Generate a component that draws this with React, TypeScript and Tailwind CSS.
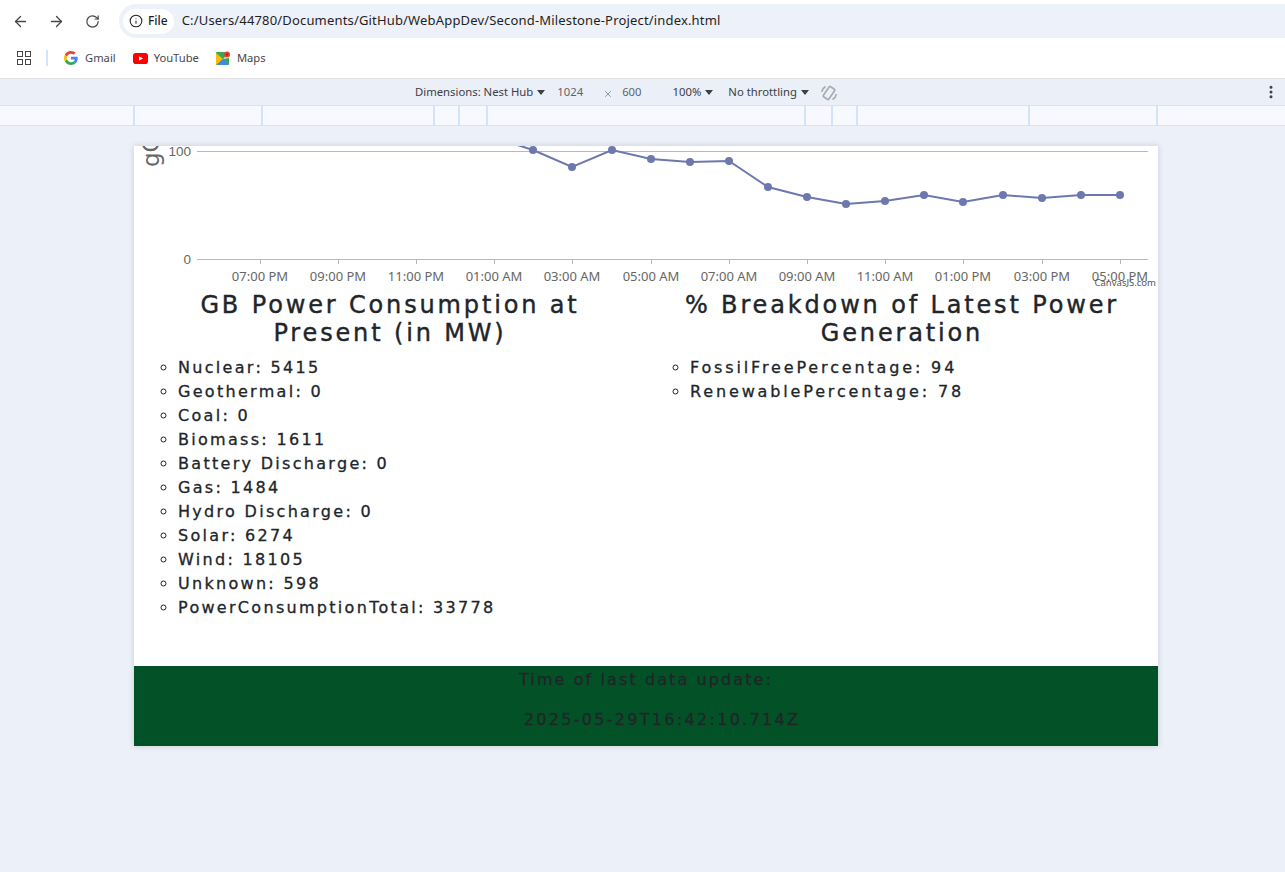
import React from 'react';
import { ArrowLeft, ArrowRight, RotateCw, Info, EllipsisVertical, X } from 'lucide-react';

const generation = [
  'Nuclear: 5415',
  'Geothermal: 0',
  'Coal: 0',
  'Biomass: 1611',
  'Battery Discharge: 0',
  'Gas: 1484',
  'Hydro Discharge: 0',
  'Solar: 6274',
  'Wind: 18105',
  'Unknown: 598',
  'PowerConsumptionTotal: 33778',
];

const breakdown = ['FossilFreePercentage: 94', 'RenewablePercentage: 78'];

const points: [number, number][] = [
  [505, 141], [533, 150], [572, 167], [612, 150], [651, 159], [690, 162], [729, 161], [768, 187], [807, 197],
  [846, 204], [885, 201], [924, 195], [963, 202], [1003, 195], [1042, 198], [1081, 195], [1120, 195],
];

const ticks: [number, string][] = [
  [260, '07:00 PM'], [338, '09:00 PM'], [416, '11:00 PM'], [494, '01:00 AM'], [572, '03:00 AM'], [651, '05:00 AM'],
  [729, '07:00 AM'], [807, '09:00 AM'], [885, '11:00 AM'], [963, '01:00 PM'], [1042, '03:00 PM'], [1120, '05:00 PM'],
];

function Caret() {
  return <span className="ml-[4px] inline-block w-0 h-0 border-x-[4px] border-x-transparent border-t-[5px] border-t-[#3c4043]" />;
}

function GoogleIcon() {
  return (
    <svg width="14" height="14" viewBox="0 0 48 48">
      <path fill="#EA4335" d="M24 9.5c3.5 0 6.700 1.300 9.100 3.500l6.800-6.800C35.800 2.400 30.300 0 24 0 14.600 0 6.500 5.400 2.600 13.200l7.900 6.200C12.400 13.600 17.700 9.500 24 9.500z" />
      <path fill="#4285F4" d="M46.900 24.500c0-1.600-.1-3.100-.4-4.500H24v9h12.900c-.6 3-2.200 5.500-4.700 7.200l7.700 6c4.500-4.200 7-10.300 7-17.700z" />
      <path fill="#FBBC05" d="M10.500 28.600c-.5-1.400-.8-3-.8-4.600s.3-3.200.8-4.600l-7.900-6.200C.9 16.500 0 20.100 0 24s.9 7.500 2.600 10.800l7.900-6.200z" />
      <path fill="#34A853" d="M24 48c6.500 0 11.900-2.100 15.900-5.800l-7.700-6c-2.200 1.500-4.900 2.300-8.200 2.300-6.300 0-11.600-4.100-13.500-9.900l-7.900 6.200C6.500 42.600 14.600 48 24 48z" />
    </svg>
  );
}

function YoutubeIcon() {
  return (
    <svg width="15" height="11" viewBox="0 0 15 11">
      <rect width="15" height="11" rx="2.800" fill="#f00" />
      <path d="M6 3.200v4.600l4-2.300z" fill="#fff" />
    </svg>
  );
}

function MapsIcon() {
  return (
    <svg width="15" height="15" viewBox="0 0 15 15">
      <rect y="1" width="13" height="13" rx="1" fill="#34a853" />
      <path d="M0 2 L7 8 L0 14z" fill="#fbbc04" />
      <path d="M1 14 L7 8 L13 14z" fill="#4285f4" />
      <path d="M7 8 L13 2 L13 7z" fill="#e8eaed" />
      <circle cx="11" cy="3.500" r="3" fill="#ea4335" />
      <circle cx="11" cy="3.500" r="1" fill="#a50e0e" />
    </svg>
  );
}

function Chart() {
  return (
    <svg className="block w-[1024px] h-[146px]" viewBox="134 146 1024 146">
      <line x1="197" y1="151.500" x2="1148" y2="151.500" stroke="#b8b8b8" strokeWidth="1" />
      <line x1="197" y1="259.500" x2="1148" y2="259.500" stroke="#b8b8b8" strokeWidth="1" />
      {ticks.map(([x, label]) => (
        <g key={label + x}>
          <line x1={x + 0.5} y1="259" x2={x + 0.5} y2="264" stroke="#b8b8b8" />
          <text x={x} y="281" textAnchor="middle" fontFamily="'Noto Sans', sans-serif" fontSize="13" fill="#666">
            {label}
          </text>
        </g>
      ))}
      <text x="191" y="156" textAnchor="end" fontFamily="'Liberation Sans', sans-serif" fontSize="13.500" fill="#666">100</text>
      <text x="191" y="264" textAnchor="end" fontFamily="'Liberation Sans', sans-serif" fontSize="13.500" fill="#666">0</text>
      <text transform="translate(159 167) rotate(-90)" fontFamily="'DejaVu Sans', sans-serif" fontSize="23" fill="#666">gCO2/kWh</text>
      <polyline points={points.map((p) => p.join(',')).join(' ')} fill="none" stroke="#6d78ad" strokeWidth="2" />
      {points.slice(1).map(([x, y]) => (
        <circle key={x} cx={x} cy={y} r="4" fill="#6d78ad" />
      ))}
      <text x="1156" y="286" textAnchor="end" fontFamily="'Noto Sans', sans-serif" fontSize="9.500" fill="#555">CanvasJS.com</text>
    </svg>
  );
}

function DataColumn({ title, items, wide }: { title: string; items: string[]; wide?: boolean }) {
  return (
    <div className="w-[512px] px-3">
      <h2 className="text-center text-[24px] leading-[28px] font-normal tracking-[2.85px] text-[#212529] [-webkit-text-stroke:0.4px_#212529] mb-[9px]">{title}</h2>
      <ul className={`list-[circle] pl-8 text-[16px] leading-[24px] text-[#212529] [-webkit-text-stroke:0.3px_#212529] ${wide ? 'tracking-[2.85px]' : 'tracking-[2.3px]'}`}>
        {items.map((item) => (
          <li key={item}>{item}</li>
        ))}
      </ul>
    </div>
  );
}

export default function App() {
  return (
    <div className="w-[1285px] h-[872px] overflow-hidden bg-[#ecf0f9] font-['Noto_Sans',sans-serif]">
      {/* browser toolbar */}
      <div className="bg-white h-[78px]">
        <div className="flex items-center h-[42px] text-[#444746]">
          <ArrowLeft className="ml-[12px] w-[17px] h-[17px]" strokeWidth={1.800} />
          <ArrowRight className="ml-[19px] w-[17px] h-[17px]" strokeWidth={1.800} />
          <RotateCw className="ml-[20px] w-[15px] h-[15px]" strokeWidth={1.900} />
          <div className="ml-[19px] flex-1 h-[34px] flex items-center bg-[#edf1f9] rounded-l-[17px] pl-[4px]">
            <div className="flex items-center h-[25px] px-[6px] bg-white rounded-[13px] text-[#1f1f1f]">
              <Info className="w-[14px] h-[14px]" strokeWidth={1.800} />
              <span className="ml-[5px] text-[12px] font-medium">File</span>
            </div>
            <span className="ml-[8px] text-[13px] tracking-[0.17px] text-[#1f1f1f]">
              C:/Users/44780/Documents/GitHub/WebAppDev/Second-Milestone-Project/index.html
            </span>
          </div>
        </div>
        <div className="flex items-center h-[32px] text-[11.200px] text-[#474747]">
          <div className="ml-[17px] grid grid-cols-2 gap-[2px]">
            <span className="w-[6px] h-[6px] border-[1.500px] border-[#474747]" />
            <span className="w-[6px] h-[6px] border-[1.500px] border-[#474747]" />
            <span className="w-[6px] h-[6px] border-[1.500px] border-[#474747]" />
            <span className="w-[6px] h-[6px] border-[1.500px] border-[#474747]" />
          </div>
          <span className="ml-[15px] w-[2px] h-[16px] bg-[#d3e3fd]" />
          <div className="ml-[16px]"><GoogleIcon /></div>
          <span className="ml-[7px]">Gmail</span>
          <div className="ml-[17px]"><YoutubeIcon /></div>
          <span className="ml-[6px]">YouTube</span>
          <div className="ml-[17px]"><MapsIcon /></div>
          <span className="ml-[6px]">Maps</span>
        </div>
      </div>

      {/* device toolbar */}
      <div className="relative flex items-center h-[28px] pt-[1px] pl-[415px] bg-[#ebeff8] border-t border-[#dfe1e5] border-b border-b-[#d3e3fd] text-[11.300px] text-[#3c4043]">
        <span>Dimensions: Nest Hub</span>
        <Caret />
        <span className="ml-[12px] text-[#5f6368]">1024</span>
        <X className="ml-[20px] mt-[3px] w-[10px] h-[10px] text-[#5f6368]" strokeWidth={1.500} />
        <span className="ml-[9px] text-[#5f6368]">600</span>
        <span className="ml-[31px]">100%</span>
        <Caret />
        <span className="ml-[15px]">No throttling</span>
        <Caret />
        <svg className="ml-[10px]" width="20" height="20" viewBox="0 0 18 18" fill="none" stroke="#a8abb0" strokeWidth="1.500">
          <g transform="rotate(35 9 9)">
            <rect x="6" y="3.500" width="6" height="11" rx="1" />
            <path d="M3 12 A7.500 7.500 0 0 1 3 6" />
            <path d="M15 6 A7.500 7.500 0 0 1 15 12" />
          </g>
        </svg>
        <EllipsisVertical className="absolute right-[6px] top-[5px] w-[16px] h-[16px] text-[#3c4043]" strokeWidth={2.500} />
      </div>

      {/* ruler */}
      <div className="flex h-[20px] bg-[#f8f9ff] border-b border-[#d3e3fd]">
        <div className="w-[133px]" />
        <div className="w-[128px] border-l-2 border-[#d3e3fd]" />
        <div className="w-[172px] border-l-2 border-[#d3e3fd]" />
        <div className="w-[25px] border-l-2 border-[#d3e3fd]" />
        <div className="w-[28px] border-l-2 border-[#d3e3fd]" />
        <div className="w-[318px] border-l-2 border-[#d3e3fd]" />
        <div className="w-[27px] border-l-2 border-[#d3e3fd]" />
        <div className="w-[25px] border-l-2 border-[#d3e3fd]" />
        <div className="w-[172px] border-l-2 border-[#d3e3fd]" />
        <div className="w-[128px] border-l-2 border-[#d3e3fd]" />
        <div className="flex-1 border-l-2 border-[#d3e3fd]" />
      </div>

      {/* emulated page */}
      <div className="ml-[134px] mt-[20px] w-[1024px] h-[600px] bg-white overflow-hidden flex flex-col shadow-[0_0_6px_rgba(60,64,67,0.2)] font-['DejaVu_Sans',sans-serif]">
        <Chart />
        <div className="flex flex-1 -mt-[1px]">
          <DataColumn title="GB Power Consumption at Present (in MW)" items={generation} />
          <DataColumn title="% Breakdown of Latest Power Generation" items={breakdown} wide />
        </div>
        <div className="h-[80px] pt-[2px] bg-[#035227] text-center text-[16px] leading-[24px] tracking-[2.1px] text-[#212529] [-webkit-text-stroke:0.3px_#212529]">
          <p>Time of last data update:</p>
          <p className="mt-[16px] pl-[32px] tracking-[2.3px]">2025-05-29T16:42:10.714Z</p>
        </div>
      </div>
    </div>
  );
}
